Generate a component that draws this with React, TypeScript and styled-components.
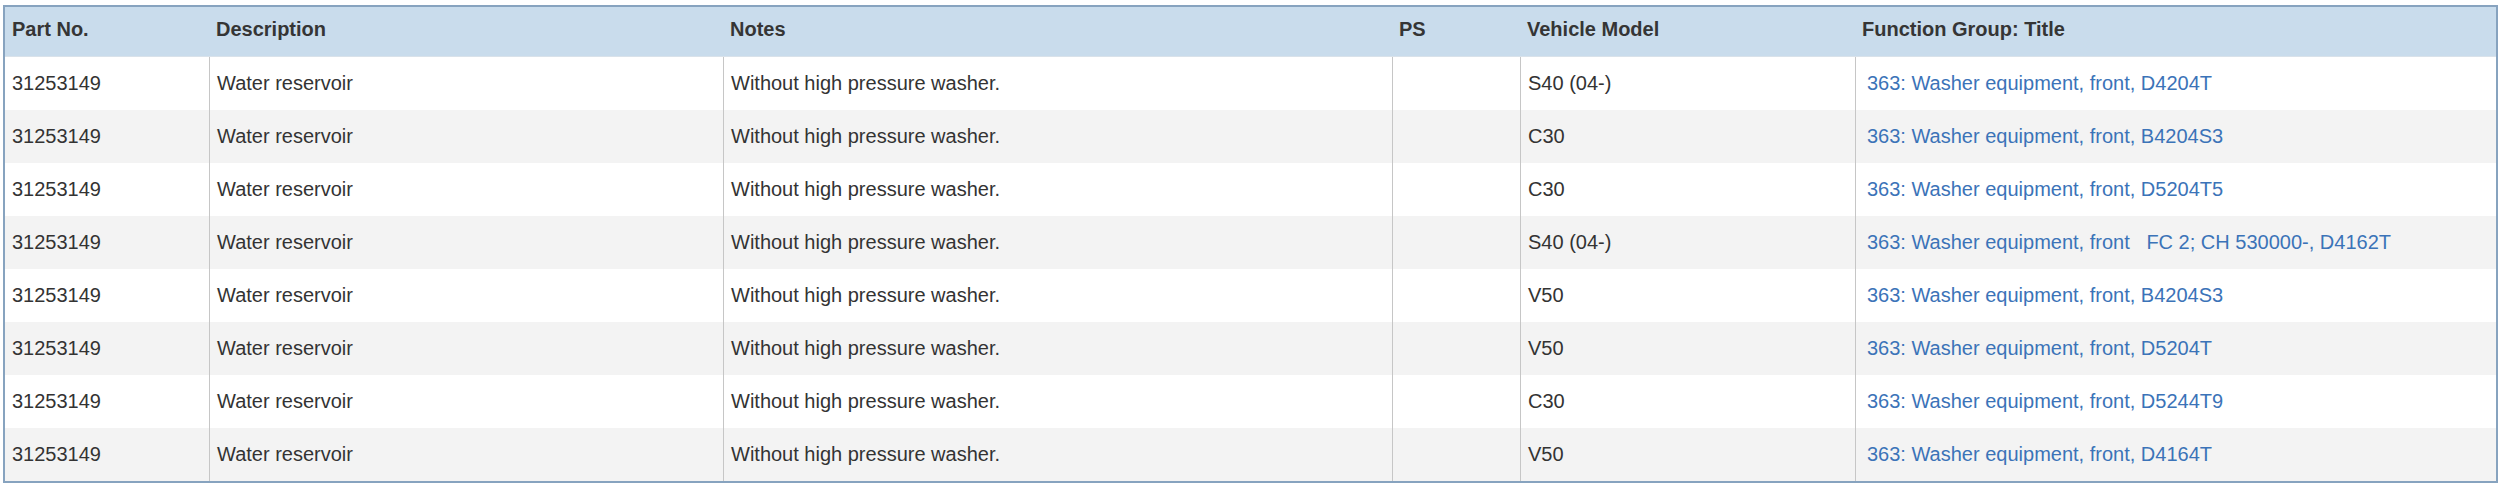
import React from "react";
import styled, { createGlobalStyle } from "styled-components";

const GlobalStyle = createGlobalStyle`
  html, body {
    margin: 0;
    padding: 0;
    background: #ffffff;
  }
  body {
    font-family: "Liberation Sans", Arial, sans-serif;
    font-size: 20px;
    color: #333333;
  }
`;

const COLUMNS = "204px 514px 669px 128px 335px 1fr";

const Page = styled.div`
  padding: 5px 2px 0 3px;
`;

const Table = styled.div`
  border: 2px solid #87a3bf;
  display: flex;
  flex-direction: column;
`;

const HeaderRow = styled.div`
  display: grid;
  grid-template-columns: ${COLUMNS};
  height: 50px;
  background: #c9dcec;
  border-bottom: 1px solid #d9e2ea;
  box-sizing: border-box;
`;

const HeaderCell = styled.div`
  display: flex;
  align-items: center;
  padding: 0 7px 4px 7px;
  font-weight: 700;
  color: #353535;
  white-space: nowrap;
`;

const Row = styled.div<{ $alt: boolean }>`
  display: grid;
  grid-template-columns: ${COLUMNS};
  height: 53px;
  background: ${(p) => (p.$alt ? "#f3f3f3" : "#ffffff")};
`;

const Cell = styled.div<{ $first?: boolean }>`
  display: flex;
  align-items: center;
  padding: 0 7px;
  border-left: ${(p) => (p.$first ? "none" : "1px solid #c6c6c6")};
  box-sizing: border-box;
  white-space: nowrap;
  color: #333333;
`;

const GroupLink = styled.a`
  margin-left: 4px;
  color: #3b73b8;
  text-decoration: none;
  white-space: pre;
  cursor: pointer;
`;

type Item = {
  part: string;
  desc: string;
  notes: string;
  ps: string;
  model: string;
  group: string;
};

const base = {
  part: "31253149",
  desc: "Water reservoir",
  notes: "Without high pressure washer.",
  ps: "",
};

const rows: Item[] = [
  { ...base, model: "S40 (04-)", group: "363: Washer equipment, front, D4204T" },
  { ...base, model: "C30", group: "363: Washer equipment, front, B4204S3" },
  { ...base, model: "C30", group: "363: Washer equipment, front, D5204T5" },
  {
    ...base,
    model: "S40 (04-)",
    group: "363: Washer equipment, front   FC 2; CH 530000-, D4162T",
  },
  { ...base, model: "V50", group: "363: Washer equipment, front, B4204S3" },
  { ...base, model: "V50", group: "363: Washer equipment, front, D5204T" },
  { ...base, model: "C30", group: "363: Washer equipment, front, D5244T9" },
  { ...base, model: "V50", group: "363: Washer equipment, front, D4164T" },
];

const headers = [
  "Part No.",
  "Description",
  "Notes",
  "PS",
  "Vehicle Model",
  "Function Group: Title",
];

export default function App() {
  return (
    <>
      <GlobalStyle />
      <Page>
        <Table>
          <HeaderRow>
            {headers.map((h) => (
              <HeaderCell key={h}>{h}</HeaderCell>
            ))}
          </HeaderRow>
          {rows.map((r, i) => (
            <Row key={i} $alt={i % 2 === 1}>
              <Cell $first>{r.part}</Cell>
              <Cell>{r.desc}</Cell>
              <Cell>{r.notes}</Cell>
              <Cell>{r.ps}</Cell>
              <Cell>{r.model}</Cell>
              <Cell>
                <GroupLink>{r.group}</GroupLink>
              </Cell>
            </Row>
          ))}
        </Table>
      </Page>
    </>
  );
}
